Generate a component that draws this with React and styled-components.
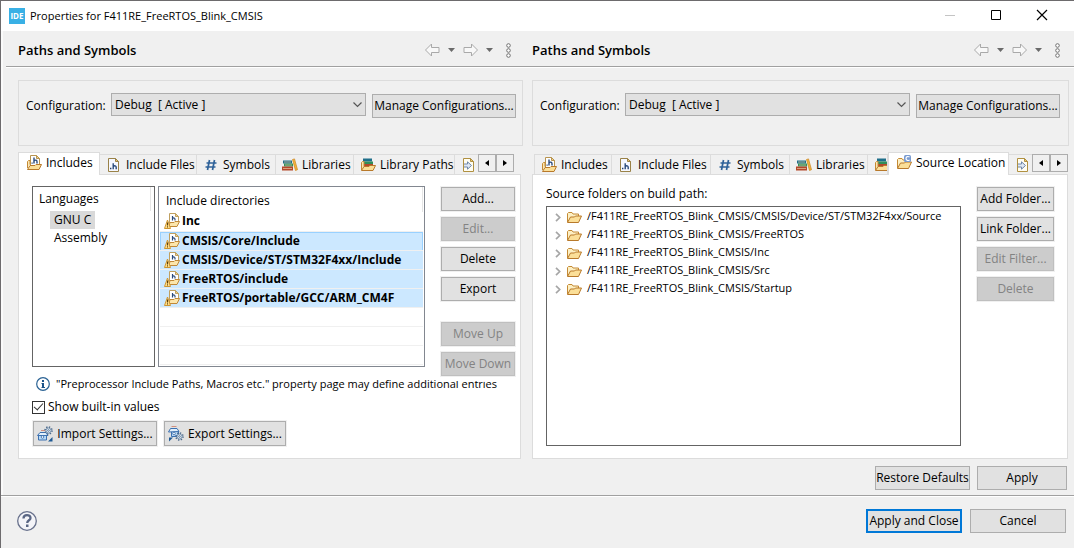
import React from "react";
import styled, { createGlobalStyle, css } from "styled-components";

const GlobalStyle = createGlobalStyle`
  *, *::before, *::after { box-sizing: border-box; }
  body { margin: 0; background: #f0f0f0; }
  body, button, select, input {
    font-family: "Open Sans", "Noto Sans", sans-serif;
    font-size: 12px;
    line-height: 16px;
    color: #000;
  }
  ul { list-style: none; margin: 0; padding: 0; }
  svg { display: block; flex: none; }
`;

const Window = styled.div`
  min-height: 100vh;
  display: flex;
  flex-direction: column;
  background: #f0f0f0;
  border-top: 1px solid #6d6b6d;
  border-left: 1px solid #6d6b6d;
`;

const TitleBar = styled.header`
  display: flex;
  align-items: center;
  height: 30px;
  padding: 0 25px 0 8px;
  background: #fff;
`;

const AppBadge = styled.span`
  width: 16px;
  height: 16px;
  margin-right: 5px;
  background: #39b0e5;
  color: #fff;
  font-size: 8px;
  font-weight: 700;
  line-height: 16px;
  text-align: center;
`;

const WindowTitle = styled.h1`
  flex: 1;
  margin: 0;
  font-size: 11px;
  font-weight: 400;
`;

const WindowControls = styled.div`
  display: flex;
  gap: 32px;
`;

const PlainButton = styled.button`
  display: flex;
  align-items: center;
  justify-content: center;
  padding: 0;
  border: 0;
  background: none;
`;

const Body = styled.main`
  flex: 1;
  border-left: 2px solid #fafafa;
`;

const Columns = styled.div`
  display: grid;
  grid-template-columns: 505fr 537fr;
  gap: 9px;
  padding: 0 5px 0 15px;
`;

const HeaderStrip = styled.div`
  margin-left: 3px;
  border-bottom: 1px solid #a0a0a0;
  box-shadow: 0 1px 0 #fff;
  margin-bottom: 13px;
  & > ${Columns} { padding-left: 12px; }
`;

const PageHeader = styled.div`
  display: flex;
  align-items: center;
  justify-content: space-between;
  height: 35px;
  padding: 3px ${(p) => p.$inset}px 0 0;
`;

const PageTitle = styled.h2`
  margin: 0;
  font-size: 13px;
  font-weight: 600;
`;

const NavTools = styled.div`
  display: flex;
  align-items: center;
  gap: 8px;
`;

const MenuGap = styled.span`
  padding-left: 5px;
`;

const Page = styled.section`
  min-width: 0;
  display: flex;
  flex-direction: column;
`;

const ConfigBox = styled.div`
  display: flex;
  align-items: flex-start;
  gap: 6px;
  height: 66px;
  padding: 12px ${(p) => p.$inset}px 0 7px;
  border: 1px solid #dcdcdc;
  & > button { margin-top: 1px; }
`;

const ConfigLabel = styled.label`
  width: 79px;
  padding-top: 5px;
  white-space: nowrap;
`;

const SelectWrap = styled.div`
  flex: 1;
  display: grid;
  align-items: center;
  & > * { grid-area: 1 / 1; }
  & > svg { justify-self: end; margin-right: 4px; pointer-events: none; }
`;

const Select = styled.select`
  width: 100%;
  height: 23px;
  padding: 0 3px;
  appearance: none;
  border: 1px solid #adadad;
  border-radius: 0;
  background: #e1e1e1;
`;

const Button = styled.button`
  display: flex;
  align-items: center;
  justify-content: center;
  gap: 4px;
  width: ${(p) => (p.$w ? p.$w + "px" : "auto")};
  height: ${(p) => (p.$tall ? 25 : 24)}px;
  padding: 0;
  border: 1px solid #adadad;
  background: #e1e1e1;
  white-space: nowrap;
  outline: 1px solid #f0f0f0;
  &:disabled { color: #838383; background: #ccc; border-color: #bfbfbf; }
  ${(p) => p.$primary && css`border: 2px solid #0078d7;`}
`;

const TabStrip = styled.div`
  display: flex;
  align-items: flex-end;
  height: 22px;
  margin-top: 6px;
  padding: 0 ${(p) => p.$end}px 0 ${(p) => p.$start}px;
`;

const Tab = styled.button`
  display: flex;
  align-items: center;
  gap: 4px;
  height: 20px;
  width: ${(p) => (p.$w ? p.$w + "px" : "auto")};
  ${(p) => (p.$w ? "flex: none;" : "flex: 1 1 0; min-width: 0;")}
  padding: 0 0 0 6px;
  overflow: hidden;
  border: 1px solid #dcdcdc;
  border-width: 1px 1px 0 0;
  background: #f0f0f0;
  white-space: nowrap;
  ${(p) => p.$first && css`border-left-width: 1px;`}
  ${(p) => !p.$w && css`border-right-width: 0;`}
  ${(p) =>
    p.$active &&
    css`
      position: relative;
      height: 23px;
      margin-bottom: -1px;
      padding: 0 0 2px 7px;
      border-left-width: 1px;
      background: #fff;
    `}
`;

const TabScroll = styled(PlainButton)`
  flex: none;
  width: 18px;
  height: 18px;
  margin-bottom: 2px;
  border: 1px solid #adadad;
  background: #f0f0f0;
`;

const Panel = styled.div`
  flex: 1;
  margin-right: ${(p) => p.$gap}px;
  padding: 11px ${(p) => p.$inset}px 12px 13px;
  border: 1px solid #dcdcdc;
  background: #fff;
`;

const Lists = styled.div`
  display: flex;
  align-items: flex-start;
  gap: 3px;
`;

const ListFrame = styled.div`
  border: 1px solid ${(p) => (p.$wide ? "#828790" : "#646464")};
  height: 181px;
  ${(p) => (p.$wide ? "flex: 1; min-width: 0; padding: 0 1px;" : "width: 123px;")}
`;

const ListHeading = styled.div`
  height: 24px;
  margin-right: 3px;
  padding: 4px 6px 0;
  border-right: 1px solid #e5e5e5;
`;

const LanguageItem = styled.li`
  width: fit-content;
  margin-left: 17px;
  padding: 1px 4px;
  background: ${(p) => (p.$selected ? "#d9d9d9" : "none")};
`;

const DirTable = styled.table`
  width: 100%;
  border-collapse: collapse;
`;

const DirHead = styled.th`
  height: 25px;
  padding: 2px 6px 0;
  border-right: 1px solid #e5e5e5;
  font-weight: 400;
  text-align: left;
`;

const DirCell = styled.td`
  height: 19px;
  padding: 0 0 0 4px;
  border-bottom: 1px solid #f0f0f0;
  background: ${(p) => (p.$selected ? "#cce8ff" : "#fff")};
  font-weight: 700;
  white-space: nowrap;
  ${(p) => p.$focus && css`box-shadow: inset 1px 1px 0 #99d1ff, inset -1px 0 0 #99d1ff;`}
`;

const CellContent = styled.div`
  display: flex;
  align-items: center;
  gap: 2px;
  height: 18px;
`;

const SideButtons = styled.div`
  position: relative;
  display: flex;
  flex-direction: column;
  gap: 6px;
  flex: none;
  margin: 0 0 -14px ${(p) => p.$gap}px;
  padding: 1px 1px 5px;
  background: #fff;
`;

const ButtonGap = styled.div`
  height: 9px;
`;

const InfoRow = styled.p`
  display: flex;
  align-items: center;
  gap: 6px;
  margin: 9px 0 0 4px;
  font-size: 11px;
  white-space: nowrap;
`;

const CheckLabel = styled.label`
  display: flex;
  align-items: center;
  gap: 3px;
  width: fit-content;
  margin-top: 7px;
`;

const Checkbox = styled.input`
  appearance: none;
  display: flex;
  align-items: center;
  justify-content: center;
  width: 13px;
  height: 13px;
  margin: 0;
  border: 1px solid #333;
  background: #fff;
  &:checked::after {
    content: "";
    width: 9px;
    height: 5px;
    margin-bottom: 3px;
    border: solid #333;
    border-width: 0 0 1px 1px;
    transform: rotate(-48deg);
  }
`;

const ButtonRow = styled.div`
  display: flex;
  justify-content: ${(p) => (p.$end ? "flex-end" : "flex-start")};
  gap: 7px;
  margin: ${(p) => p.$m};
`;

const TreeTitle = styled.h3`
  margin: 0 0 4px;
  font-size: 12px;
  font-weight: 400;
`;

const Tree = styled.ul`
  height: 240px;
  border: 1px solid #646464;
`;

const TreeColumn = styled.div`
  flex: 1;
  min-width: 0;
`;

const TreeItem = styled.li`
  display: flex;
  align-items: center;
  height: 18px;
  padding-left: 7px;
  font-size: 11px;
  white-space: nowrap;
  & > button { width: 8px; margin: 3px 4px 0 0; }
  & > svg { margin: 2px 5px 0 0; }
`;

const Footer = styled.footer`
  display: flex;
  align-items: center;
  gap: 8px;
  height: 53px;
  padding: 0 8px 2px 16px;
  border-top: 1px solid #a0a0a0;
  box-shadow: inset 0 1px 0 #fff;
  & > :first-child { margin-right: auto; }
`;

/* ---- icons ---- */

const Svg = ({ w = 16, h = 16, children }) => (
  <svg width={w} height={h} viewBox={`0 0 ${w} ${h}`} fill="none" aria-hidden="true">
    {children}
  </svg>
);

const HLetter = ({ x, y }) => (
  <path d={`M${x} ${y}v6M${x} ${y + 3.4}c1.4-1.4 3-.8 3 .8V${y + 6}`} stroke="#2a4a7c" strokeWidth="1.4" />
);

const IncludesIcon = () => (
  <Svg>
    <path d="M4.500 12V.500h6l3 3V12z" fill="#fff" stroke="#b89450" />
    <path d="M10.500.500v3h3z" fill="#f0d48a" stroke="#b89450" />
    <HLetter x={8} y={2.5} />
    <path d="M5.500 7.500h1.200v1.200H5.500z" fill="#2a4a7c" />
    <path d="M1.500 13V6.500l1-1h1.500v4" fill="#fbe6b0" stroke="#c48a35" />
    <path d="M1.500 14.500l2.500-4h5l1-1h5.500l-2.500 5z" fill="#fbdf98" stroke="#b8792a" strokeLinejoin="round" />
  </Svg>
);

const WarnIncludesIcon = () => (
  <Svg>
    <path d="M5.500 10V.500h6l3 3V10z" fill="#fff" stroke="#c0a060" />
    <path d="M11.500.500v3h3z" fill="#f0d48a" stroke="#c0a060" />
    <path d="M8.500 3v4.500M8.500 5.500c1.200-1 2.500-.5 2.500.8v1.200" stroke="#2a4a7c" strokeWidth="1.200" />
    <path d="M5 13.500l1-4h4l1-1h4.500l-2.500 5z" fill="#fce6ac" stroke="#c08838" strokeLinejoin="round" />
    <path d="M3.500 7l3 8.500h-6z" fill="#ffdf8a" stroke="#cf9530" strokeLinejoin="round" />
    <path d="M3.500 9.500v3M3.500 13.300v1.200" stroke="#5a4010" />
  </Svg>
);

const HFileIcon = () => (
  <Svg>
    <path d="M2.500 1.500h7l3 3v10h-10z" fill="#f6f8ff" stroke="#9a8248" />
    <path d="M9.500 1.500v3h3z" fill="#f0c870" stroke="#9a8248" />
    <path d="M4 10.800h1.400v1.400H4z" fill="#23406e" />
    <HLetter x={7.2} y={6.200} />
  </Svg>
);

const HashIcon = () => (
  <Svg>
    <path d="M6.500 3l-2 10M11.500 3l-2 10M3.500 6h10M2.500 10h10" stroke="#2f6299" strokeWidth="1.700" />
  </Svg>
);

const BooksIcon = () => (
  <Svg>
    <path d="M1 3.500h9v3H1z" fill="#1f6f8a" />
    <path d="M2 6.500h9v3H2z" fill="#2f8f5a" />
    <path d="M0 9.500h11v4H0z" fill="#b4482a" />
    <path d="M2 5h7M3 8h7M1 11.500h9" stroke="#e8c8a0" strokeWidth=".7" />
    <path d="M10.500 2.500l2-.6 3 10.800-2 .8z" fill="#f4b43c" stroke="#c88420" strokeWidth=".7" />
  </Svg>
);

const LibPathsIcon = () => (
  <Svg>
    <path d="M3 1.500h9v3H3z" fill="#1f6f8a" />
    <path d="M4 4.500h9v2.500H4z" fill="#2f8f5a" />
    <path d="M3 7h10v2.500H3z" fill="#b4482a" />
    <path d="M1.500 13V5.500l1-1H4v4.500" fill="#fbe6b0" stroke="#c48a35" />
    <path d="M1.500 13.500L4 9.500h5l1-1h5.500l-2.500 5z" fill="#fbdf98" stroke="#b8792a" strokeLinejoin="round" />
  </Svg>
);

const FolderShape = () => (
  <>
    <path d="M1.500 13V4.500l1-1h3.500l1 1.500h5.500v3" fill="#fdf0c4" stroke="#c48a35" />
    <path d="M1.500 13.500l3-5.500h4l1-1h6l-3 6.500z" fill="#fbdf98" stroke="#b8792a" strokeLinejoin="round" />
  </>
);

const FolderIcon = () => <Svg><FolderShape /></Svg>;

const SourceFolderIcon = () => (
  <Svg>
    <FolderShape />
    <rect x="8" y="0" width="7" height="7" rx="1.500" fill="#7a9bd0" />
    <path d="M13.500 2.200c-1.200-1.200-3.500-.8-3.500 1.300s2.300 2.500 3.500 1.300" stroke="#fff" strokeWidth="1.200" />
  </Svg>
);

const ReferenceIcon = () => (
  <Svg>
    <path d="M2.500 1.500h7l3 3v10h-10z" fill="#fffdf2" stroke="#b09040" />
    <path d="M9.500 1.500v3h3z" fill="#f0c870" stroke="#b09040" />
    <path d="M3 7h3.500V4.800l4 3.700-4 3.700V10H3" fill="#dfe8f4" stroke="#7088aa" />
  </Svg>
);

const Gear = ({ x, y }) => (
  <g transform={`translate(${x} ${y})`}>
    <circle r="3.500" stroke="#4c6a8c" strokeWidth="1.600" strokeDasharray="1.300 1.450" />
    <circle r="2.500" fill="#eaf3fb" stroke="#5c7a9c" strokeWidth=".8" />
    <circle r=".9" stroke="#4c6a8c" strokeWidth=".8" />
  </g>
);

const ImportIcon = () => (
  <Svg>
    <path d="M1.500 9h8v5h-8z" fill="#b9dbf8" stroke="#3c70b0" />
    <path d="M.500 9.500L3 6.500h6l2 3z" stroke="#3c70b0" fill="#e2f0fc" />
    <circle cx="5.500" cy="11" r="1.300" fill="#fff" stroke="#3568a8" strokeWidth=".8" />
    <path d="M4 4.500h4" stroke="#d09080" />
    <Gear x={11.500} y={4.500} />
    <path d="M15.500 11v4.500H11z" fill="#1f5a94" />
  </Svg>
);

const ExportIcon = () => (
  <Svg>
    <path d="M3.500 5h7v5.500h-7z" fill="#b9dbf8" stroke="#3c70b0" />
    <path d="M.500 6L2.500 2.500H9l2 3z" stroke="#3c70b0" fill="#e2f0fc" />
    <circle cx="6" cy="7.500" r="1.300" fill="#fff" stroke="#3568a8" strokeWidth=".8" />
    <path d="M3.500.500h5" stroke="#d09080" />
    <Gear x={11.500} y={10.500} />
    <path d="M1 11.500h4L1 15.500z" fill="#1f5a94" />
  </Svg>
);

const InfoIcon = () => (
  <Svg w={14} h={14}>
    <circle cx="7" cy="7" r="6.300" fill="#fff" stroke="#2a6294" strokeWidth="1.200" />
    <path d="M6 3h2v2H6zM5.500 6H8v4h1v1H5.500v-1H6V7h-.500z" fill="#1a5288" />
  </Svg>
);

const HelpIcon = () => (
  <Svg w={20} h={20}>
    <circle cx="10" cy="10" r="9.300" fill="#f4f4f8" stroke="#68718c" strokeWidth="1.300" />
    <path d="M6.500 7.500c0-4.600 7-4.300 7-.6 0 2.400-3.300 2.300-3.300 5" stroke="#5a6684" strokeWidth="2.300" />
    <path d="M9 13.500h2.500V16H9z" fill="#5a6684" />
  </Svg>
);

const ArrowIcon = ({ flip }) => (
  <Svg w={15} h={14}>
    <path
      d={flip ? "M14.500 7L8.500 1v3.500H1v5h7.500V13z" : "M.500 7l6-6v3.500H14v5H6.500V13z"}
      fill="#f8f8f8"
      stroke="#a9a9a9"
      strokeLinejoin="round"
    />
  </Svg>
);

const CaretIcon = () => (
  <Svg w={7} h={4}><path d="M0 0h7L3.500 4z" fill="#6a6a6a" /></Svg>
);

const MenuDotsIcon = () => (
  <Svg w={5} h={15}>
    {[2.5, 7.5, 12.5].map((cy) => (
      <circle key={cy} cx="2.500" cy={cy} r="1.800" fill="#fff" stroke="#707070" />
    ))}
  </Svg>
);

const ComboChevron = () => (
  <Svg w={9} h={6}><path d="M.500.500l4 4 4-4" stroke="#555" strokeWidth="1.200" /></Svg>
);

const TreeChevron = () => (
  <Svg w={6} h={9}><path d="M1 .800l3.700 3.700L1 8.200" stroke="#a6a6a6" strokeWidth="1.700" /></Svg>
);

const Triangle = ({ left }) => (
  <Svg w={4} h={6}><path d={left ? "M4 0v6L0 3z" : "M0 0v6l4-3z"} fill="#000" /></Svg>
);

/* ---- composed parts ---- */

const Header = ({ inset }) => (
  <PageHeader $inset={inset}>
    <PageTitle>Paths and Symbols</PageTitle>
    <NavTools>
      <PlainButton aria-label="Back"><ArrowIcon /></PlainButton>
      <PlainButton aria-label="Back history"><CaretIcon /></PlainButton>
      <PlainButton aria-label="Forward"><ArrowIcon flip /></PlainButton>
      <PlainButton aria-label="Forward history"><CaretIcon /></PlainButton>
      <PlainButton aria-label="View menu"><MenuGap><MenuDotsIcon /></MenuGap></PlainButton>
    </NavTools>
  </PageHeader>
);

const Configuration = ({ id, inset }) => (
  <ConfigBox $inset={inset}>
    <ConfigLabel htmlFor={id}>Configuration:</ConfigLabel>
    <SelectWrap>
      <Select id={id}>
        <option>{"Debug\u00a0 [ Active ]"}</option>
      </Select>
      <ComboChevron />
    </SelectWrap>
    <Button $w={144}>Manage Configurations...</Button>
  </ConfigBox>
);

const Tabs = ({ tabs, start, end }) => (
  <TabStrip role="tablist" $start={start} $end={end}>
    {tabs.map(([Icon, label, width, active], i) => (
      <Tab key={i} role="tab" aria-selected={!!active} $w={width} $active={active} $first={i === 0}>
        <Icon />
        {label}
      </Tab>
    ))}
    <TabScroll aria-label="Scroll tabs left"><Triangle left /></TabScroll>
    <TabScroll aria-label="Scroll tabs right"><Triangle /></TabScroll>
  </TabStrip>
);

const leftTabs = [
  [IncludesIcon, "Includes", 82, true],
  [HFileIcon, "Include Files", 97],
  [HashIcon, "Symbols", 79],
  [BooksIcon, "Libraries", 78],
  [LibPathsIcon, "Library Paths", 101],
  [ReferenceIcon, "", 0],
];

const rightTabs = [
  [IncludesIcon, "Includes", 78],
  [HFileIcon, "Include Files", 99],
  [HashIcon, "Symbols", 79],
  [BooksIcon, "Libraries", 78],
  [LibPathsIcon, "", 20],
  [SourceFolderIcon, "Source Location", 121, true],
  [ReferenceIcon, "", 0],
];

const directories = [
  ["Inc", false],
  ["CMSIS/Core/Include", true],
  ["CMSIS/Device/ST/STM32F4xx/Include", true],
  ["FreeRTOS/include", true],
  ["FreeRTOS/portable/GCC/ARM_CM4F", true],
  ["", false],
  ["", false],
  ["", false],
];

const sourceFolders = ["CMSIS/Device/ST/STM32F4xx/Source", "FreeRTOS", "Inc", "Src", "Startup"];

const IncludesPanel = () => (
  <Panel $gap={2} $inset={4}>
    <Lists>
      <ListFrame>
        <ListHeading>Languages</ListHeading>
        <ul>
          <LanguageItem $selected>GNU C</LanguageItem>
          <LanguageItem>Assembly</LanguageItem>
        </ul>
      </ListFrame>
      <ListFrame $wide>
        <DirTable>
          <thead>
            <tr><DirHead scope="col">Include directories</DirHead></tr>
          </thead>
          <tbody>
            {directories.map(([name, selected], i) => (
              <tr key={i}>
                <DirCell $selected={selected} $focus={i === 1}>
                  <CellContent>
                    {name && <WarnIncludesIcon />}
                    {name}
                  </CellContent>
                </DirCell>
              </tr>
            ))}
          </tbody>
        </DirTable>
      </ListFrame>
      <SideButtons $gap={12}>
        <Button $w={74}>Add...</Button>
        <Button $w={74} disabled>Edit...</Button>
        <Button $w={74}>Delete</Button>
        <Button $w={74}>Export</Button>
        <ButtonGap />
        <Button $w={74} disabled>Move Up</Button>
        <Button $w={74} disabled>Move Down</Button>
      </SideButtons>
    </Lists>
    <InfoRow>
      <InfoIcon />
      "Preprocessor Include Paths, Macros etc." property page may define additional entries
    </InfoRow>
    <CheckLabel>
      <Checkbox type="checkbox" defaultChecked />
      Show built-in values
    </CheckLabel>
    <ButtonRow $m="6px 0 0 1px">
      <Button $w={124} $tall><ImportIcon />Import Settings...</Button>
      <Button $w={122} $tall><ExportIcon />Export Settings...</Button>
    </ButtonRow>
  </Panel>
);

const SourcePanel = () => (
  <Panel $gap={1} $inset={12}>
    <Lists>
      <TreeColumn>
        <TreeTitle>Source folders on build path:</TreeTitle>
        <Tree>
          {sourceFolders.map((name) => (
            <TreeItem key={name}>
              <PlainButton aria-label={"Expand " + name}><TreeChevron /></PlainButton>
              <FolderIcon />
              /F411RE_FreeRTOS_Blink_CMSIS/{name}
            </TreeItem>
          ))}
        </Tree>
      </TreeColumn>
      <SideButtons $gap={12}>
        <Button $w={77}>Add Folder...</Button>
        <Button $w={77}>Link Folder...</Button>
        <Button $w={77} disabled>Edit Filter...</Button>
        <Button $w={77} disabled>Delete</Button>
      </SideButtons>
    </Lists>
  </Panel>
);

export default function App() {
  return (
    <>
      <GlobalStyle />
      <Window>
        <TitleBar>
          <AppBadge>IDE</AppBadge>
          <WindowTitle>Properties for F411RE_FreeRTOS_Blink_CMSIS</WindowTitle>
          <WindowControls>
            <PlainButton aria-label="Minimize">
              <Svg w={14} h={14}><path d="M2 6.500h10" stroke="#c4c4c4" /></Svg>
            </PlainButton>
            <PlainButton aria-label="Maximize">
              <Svg w={14} h={14}><path d="M2.500 1.500h9v9h-9z" stroke="#000" /></Svg>
            </PlainButton>
            <PlainButton aria-label="Close">
              <Svg w={14} h={14}><path d="M2 1l10 10M12 1L2 11" stroke="#000" strokeWidth="1.200" /></Svg>
            </PlainButton>
          </WindowControls>
        </TitleBar>
        <Body>
          <HeaderStrip>
            <Columns>
              <Header inset={12} />
              <Header inset={9} />
            </Columns>
          </HeaderStrip>
          <Columns>
            <Page>
              <Configuration id="config-includes" inset={6} />
              <Tabs tabs={leftTabs} start={0} end={9} />
              <IncludesPanel />
            </Page>
            <Page>
              <Configuration id="config-source" inset={8} />
              <Tabs tabs={rightTabs} start={2} end={1} />
              <SourcePanel />
            </Page>
          </Columns>
          <ButtonRow $end $m="7px 7px 5px 0">
            <Button $w={95}>Restore Defaults</Button>
            <Button $w={90}>Apply</Button>
          </ButtonRow>
        </Body>
        <Footer>
          <PlainButton aria-label="Help"><HelpIcon /></PlainButton>
          <Button $w={96} $primary>Apply and Close</Button>
          <Button $w={96}>Cancel</Button>
        </Footer>
      </Window>
    </>
  );
}
